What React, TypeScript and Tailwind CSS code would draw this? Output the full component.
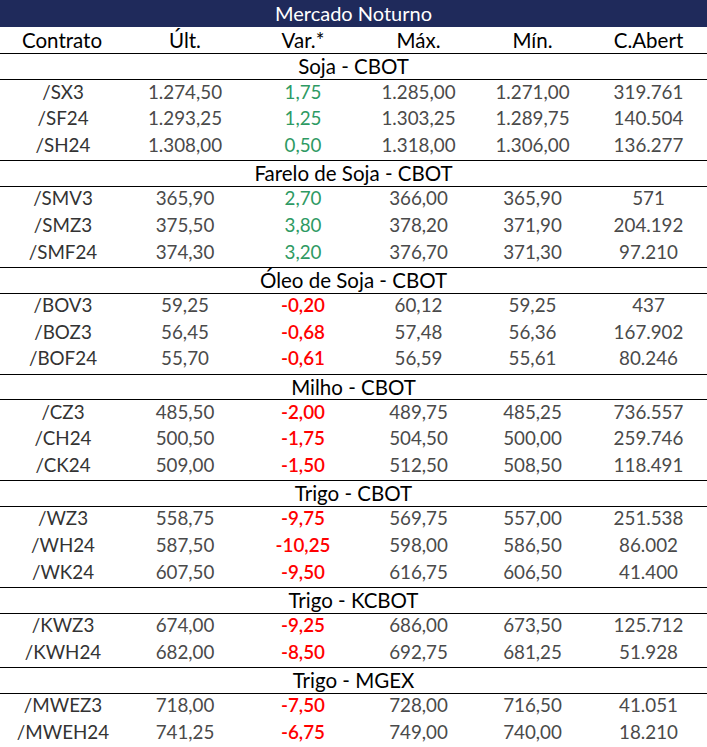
type Row = [string, string, string, string, string, string];

const sections: { title: string; rows: Row[] }[] = [
  {
    title: "Soja - CBOT",
    rows: [
      ["/SX3", "1.274,50", "1,75", "1.285,00", "1.271,00", "319.761"],
      ["/SF24", "1.293,25", "1,25", "1.303,25", "1.289,75", "140.504"],
      ["/SH24", "1.308,00", "0,50", "1.318,00", "1.306,00", "136.277"],
    ],
  },
  {
    title: "Farelo de Soja - CBOT",
    rows: [
      ["/SMV3", "365,90", "2,70", "366,00", "365,90", "571"],
      ["/SMZ3", "375,50", "3,80", "378,20", "371,90", "204.192"],
      ["/SMF24", "374,30", "3,20", "376,70", "371,30", "97.210"],
    ],
  },
  {
    title: "Óleo de Soja - CBOT",
    rows: [
      ["/BOV3", "59,25", "-0,20", "60,12", "59,25", "437"],
      ["/BOZ3", "56,45", "-0,68", "57,48", "56,36", "167.902"],
      ["/BOF24", "55,70", "-0,61", "56,59", "55,61", "80.246"],
    ],
  },
  {
    title: "Milho - CBOT",
    rows: [
      ["/CZ3", "485,50", "-2,00", "489,75", "485,25", "736.557"],
      ["/CH24", "500,50", "-1,75", "504,50", "500,00", "259.746"],
      ["/CK24", "509,00", "-1,50", "512,50", "508,50", "118.491"],
    ],
  },
  {
    title: "Trigo - CBOT",
    rows: [
      ["/WZ3", "558,75", "-9,75", "569,75", "557,00", "251.538"],
      ["/WH24", "587,50", "-10,25", "598,00", "586,50", "86.002"],
      ["/WK24", "607,50", "-9,50", "616,75", "606,50", "41.400"],
    ],
  },
  {
    title: "Trigo - KCBOT",
    rows: [
      ["/KWZ3", "674,00", "-9,25", "686,00", "673,50", "125.712"],
      ["/KWH24", "682,00", "-8,50", "692,75", "681,25", "51.928"],
    ],
  },
  {
    title: "Trigo - MGEX",
    rows: [
      ["/MWEZ3", "718,00", "-7,50", "728,00", "716,50", "41.051"],
      ["/MWEH24", "741,25", "-6,75", "749,00", "740,00", "18.210"],
    ],
  },
];

const cols = "grid grid-cols-[126px_118px_118px_113px_115px_117px]";

export default function App() {
  return (
    <main className="w-[707px] h-[747px] bg-white font-['Lato',_'Liberation_Sans',_sans-serif] text-[18.8px] leading-none">
      {/* title */}
      <div className="h-[27px] flex items-center justify-center bg-[#1f2a5b] text-white text-[20px] pb-[1px]">
        Mercado Noturno
      </div>

      {/* header */}
      <div className={`${cols} h-[26.5px] border-b border-black text-black items-center text-center text-[20.5px]`}>
        <div className="pr-[2px]">Contrato</div>
        <div>Últ.</div>
        <div>Var.*</div>
        <div>Máx.</div>
        <div>Mín.</div>
        <div>C.Abert</div>
      </div>

      {sections.map((s, i) => (
        <section key={s.title}>
          <div
            className={`h-[26.68px] flex items-center justify-center text-black text-[20.5px] border-b border-black ${
              i > 0 ? "border-t" : ""
            }`}
          >
            {s.title}
          </div>
          {s.rows.map((r) => {
            const neg = r[2].startsWith("-");
            return (
              <div key={r[0]} className={`${cols} h-[26.68px] items-center text-center text-[#4a4a4a] pb-[3px]`}>
                <div className="text-[#333]">{r[0]}</div>
                <div>{r[1]}</div>
                <div className={neg ? "text-[#ff0000] font-semibold" : "text-[#2e9a63]"}>{r[2]}</div>
                <div>{r[3]}</div>
                <div>{r[4]}</div>
                <div>{r[5]}</div>
              </div>
            );
          })}
        </section>
      ))}
    </main>
  );
}
